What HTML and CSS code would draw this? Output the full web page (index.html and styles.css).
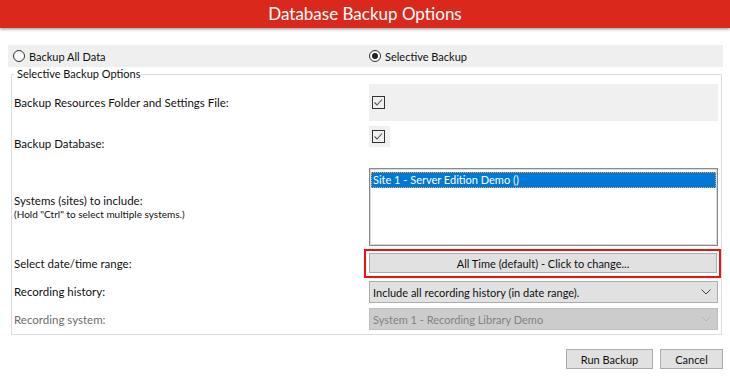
FILE: index.html
```html
<!DOCTYPE html>
<html lang="en">
<head>
    <meta charset="UTF-8">
    <meta name="viewport" content="width=device-width, initial-scale=1.0">
    <title>Database Backup Options</title>
    <link rel="stylesheet" href="styles.css">
</head>
<body>
    <header class="titlebar">Database Backup Options</header>

    <main class="dialog">
        <div class="mode-row">
            <label class="radio"><span class="radio-dot"></span>Backup All Data</label>
            <label class="radio"><span class="radio-dot checked"></span>Selective Backup</label>
        </div>

        <fieldset class="group">
            <legend>Selective Backup Options</legend>

            <div class="opt-row row-resources">
                <div class="opt-label">Backup Resources Folder and Settings File:</div>
                <div class="opt-control panel">
                    <span class="check">
                        <svg width="13" height="13" viewBox="0 0 13 13"><polyline points="2.5,6.5 5,9 10,3.5" fill="none" stroke="#555" stroke-width="1.1"/></svg>
                    </span>
                </div>
            </div>

            <div class="opt-row row-database">
                <div class="opt-label">Backup Database:</div>
                <div class="opt-control">
                    <div class="check-wrap">
                        <span class="check">
                            <svg width="13" height="13" viewBox="0 0 13 13"><polyline points="2.5,6.5 5,9 10,3.5" fill="none" stroke="#555" stroke-width="1.1"/></svg>
                        </span>
                    </div>
                </div>
            </div>

            <div class="opt-row row-systems">
                <div class="opt-label">
                    Systems (sites) to include:
                    <div class="hint">(Hold "Ctrl" to select multiple systems.)</div>
                </div>
                <div class="opt-control">
                    <div class="listbox">
                        <div class="list-item selected">Site 1 - Server Edition Demo ()</div>
                    </div>
                </div>
            </div>

            <div class="opt-row row-range">
                <div class="opt-label">Select date/time range:</div>
                <div class="opt-control">
                    <div class="highlight">
                        <button class="btn range-btn">All Time (default) - Click to change...</button>
                    </div>
                </div>
            </div>

            <div class="opt-row row-history">
                <div class="opt-label">Recording history:</div>
                <div class="opt-control">
                    <div class="combo">
                        <span>Include all recording history (in date range).</span>
                        <svg width="10" height="6" viewBox="0 0 10 6"><polyline points="0.5,0.5 5,5 9.5,0.5" fill="none" stroke="#444" stroke-width="1"/></svg>
                    </div>
                </div>
            </div>

            <div class="opt-row row-system">
                <div class="opt-label disabled">Recording system:</div>
                <div class="opt-control">
                    <div class="combo disabled">
                        <span>System 1 - Recording Library Demo</span>
                        <svg width="10" height="6" viewBox="0 0 10 6"><polyline points="0.5,0.5 5,5 9.5,0.5" fill="none" stroke="#b5b5b5" stroke-width="1"/></svg>
                    </div>
                </div>
            </div>
        </fieldset>

        <div class="actions">
            <button class="btn run-btn">Run Backup</button>
            <button class="btn cancel-btn">Cancel</button>
        </div>
    </main>
</body>
</html>
```

FILE: styles.css
```css
* {
    margin: 0;
    padding: 0;
    box-sizing: border-box;
}
body {
    font-family: Lato, "Noto Sans", sans-serif;
    font-size: 11px;
    color: #111;
    background-color: #fff;
    width: 730px;
    height: 378px;
    overflow: hidden;
}
.titlebar {
    height: 28px;
    line-height: 28px;
    background-color: #da291c;
    color: #fff;
    font-size: 17px;
    text-align: center;
    box-shadow: 0 1px 3px rgba(0,0,0,0.45);
    position: relative;
}
.dialog {
    padding: 17px 7px 0 8px;
}
.mode-row {
    display: grid;
    grid-template-columns: 356px 1fr;
    height: 22px;
    background-color: #efefef;
    align-items: center;
}
.radio {
    display: flex;
    align-items: center;
    gap: 4px;
    padding-left: 5px;
}
.radio-dot {
    width: 12px;
    height: 12px;
    border: 1px solid #333;
    border-radius: 50%;
    background-color: #fff;
    display: flex;
    align-items: center;
    justify-content: center;
}
.radio-dot.checked::after {
    content: "";
    width: 6px;
    height: 6px;
    border-radius: 50%;
    background-color: #222;
}
.group {
    margin: 0 1px 0 3px;
    border: 1px solid #dcdcdc;
    padding: 0 3px 1px 2px;
    min-width: 0;
}
.group legend {
    line-height: 14px;
    padding: 0 1px 0 3px;
}
.opt-row {
    display: grid;
    grid-template-columns: 355px 1fr;
    align-items: center;
}
.opt-label {
    font-size: 11.5px;
}
.opt-control {
    align-self: start;
}
.row-resources {
    height: 37px;
    margin-top: 3px;
}
.row-database {
    height: 45px;
}
.row-systems {
    height: 82px;
}
.row-range {
    height: 30px;
}
.row-history {
    height: 27px;
}
.row-system {
    height: 28px;
}
.panel {
    height: 37px;
    background-color: #f0f0f0;
    display: flex;
    align-items: center;
    padding-left: 3px;
}
.check {
    width: 13px;
    height: 13px;
    border: 1px solid #333;
    display: block;
}
.check svg {
    display: block;
    margin: -1px;
}
.check-wrap {
    width: 21px;
    height: 21px;
    margin-top: 5px;
    background-color: #f0f0f0;
    padding: 4px 0 0 3px;
}
.hint {
    font-size: 10px;
    margin-top: 1px;
}
.listbox {
    margin-top: 2px;
    height: 78px;
    border: 1px solid #8a8a8a;
    box-shadow: inset 0 0 0 1px #d8d8d8;
    padding: 3px 1px;
    background-color: #fff;
}
.list-item {
    height: 16px;
    line-height: 14px;
    padding-left: 1px;
    white-space: nowrap;
}
.list-item.selected {
    background-color: #0078d7;
    color: #fff;
    border: 1px dotted #f3a43c;
}
.highlight {
    margin: 1px -3px 0 -5px;
    height: 29px;
    border: 2px solid #ee1111;
    padding: 2px 2px 3px 3px;
}
.btn {
    font-family: Lato, "Noto Sans", sans-serif;
    font-size: 11px;
    color: #111;
    background-color: #e1e1e1;
    border: 1px solid #adadad;
    height: 20px;
}
.range-btn {
    width: 100%;
    display: block;
}
.combo {
    margin-top: 3px;
    height: 22px;
    background-color: #e1e1e1;
    border: 1px solid #adadad;
    display: flex;
    align-items: center;
    justify-content: space-between;
    padding: 0 6px 0 3px;
}
.combo.disabled {
    background-color: #cccccc;
    border-color: #bfbfbf;
    color: #838383;
}
.opt-label.disabled {
    color: #6d6d6d;
}
.actions {
    display: flex;
    justify-content: flex-end;
    gap: 7px;
    margin-top: 14px;
}
.run-btn {
    width: 87px;
}
.cancel-btn {
    width: 63px;
}
```
